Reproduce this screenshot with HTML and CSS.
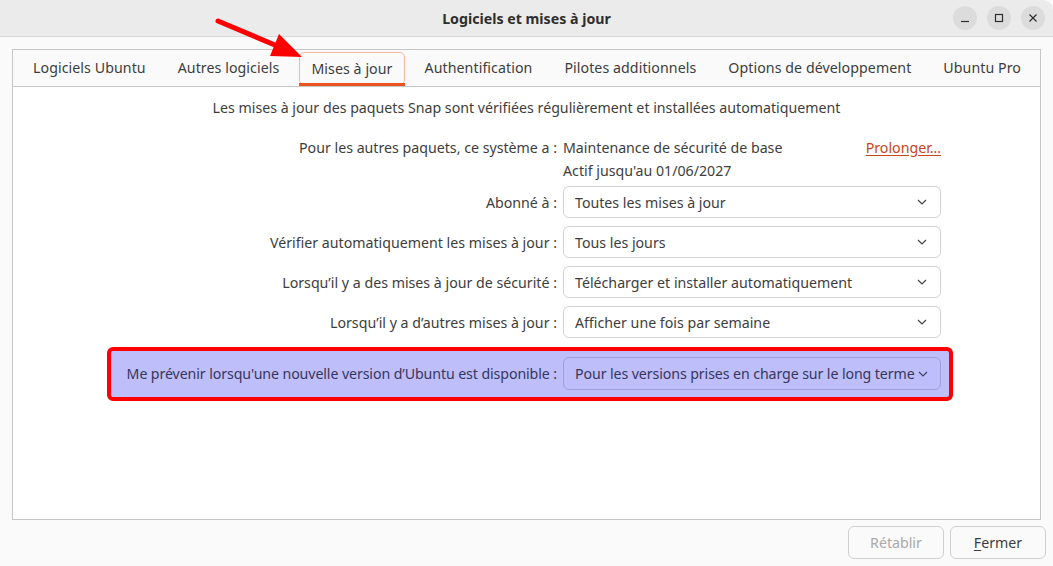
FILE: index.html
```html
<!DOCTYPE html>
<html lang="fr">
<head>
<meta charset="utf-8">
<title>Logiciels et mises à jour</title>
<link rel="stylesheet" href="styles.css">
</head>
<body>
<div class="window">
  <header class="titlebar">
    <span class="title">Logiciels et mises à jour</span>
    <div class="wincontrols">
      <span class="wbtn"><svg width="10" height="10" viewBox="0 0 10 10"><path d="M1 8.5h8" stroke="#2e2e2e" stroke-width="1.2"/></svg></span>
      <span class="wbtn"><svg width="10" height="10" viewBox="0 0 10 10"><rect x="1.5" y="1.5" width="7" height="7" fill="none" stroke="#2e2e2e" stroke-width="1.2"/></svg></span>
      <span class="wbtn"><svg width="10" height="10" viewBox="0 0 10 10"><path d="M1.5 1.5l7 7M8.5 1.5l-7 7" stroke="#2e2e2e" stroke-width="1.2"/></svg></span>
    </div>
  </header>
  <main class="body">
    <div class="notebook">
      <nav class="tabs">
        <span class="tab">Logiciels Ubuntu</span>
        <span class="tab">Autres logiciels</span>
        <span class="tab active">Mises à jour</span>
        <span class="tab">Authentification</span>
        <span class="tab">Pilotes additionnels</span>
        <span class="tab">Options de développement</span>
        <span class="tab">Ubuntu Pro</span>
      </nav>
      <section class="page">
        <p class="snap">Les mises à jour des paquets Snap sont vérifiées régulièrement et installées automatiquement</p>
        <div class="form">
          <span class="label status-label">Pour les autres paquets, ce système a :</span>
          <div class="status">
            <div class="status-line"><span>Maintenance de sécurité de base</span><a class="link">Prolonger…</a></div>
            <div class="status-line">Actif jusqu'au 01/06/2027</div>
          </div>
          <span class="label">Abonné à :</span>
          <div class="combo"><span>Toutes les mises à jour</span><svg class="chev" width="10" height="6" viewBox="0 0 10 6"><path d="M1 1l4 4 4-4" fill="none" stroke="#3d3d3d" stroke-width="1.1"/></svg></div>
          <span class="label">Vérifier automatiquement les mises à jour :</span>
          <div class="combo"><span>Tous les jours</span><svg class="chev" width="10" height="6" viewBox="0 0 10 6"><path d="M1 1l4 4 4-4" fill="none" stroke="#3d3d3d" stroke-width="1.1"/></svg></div>
          <span class="label">Lorsqu’il y a des mises à jour de sécurité :</span>
          <div class="combo"><span>Télécharger et installer automatiquement</span><svg class="chev" width="10" height="6" viewBox="0 0 10 6"><path d="M1 1l4 4 4-4" fill="none" stroke="#3d3d3d" stroke-width="1.1"/></svg></div>
          <span class="label">Lorsqu’il y a d’autres mises à jour :</span>
          <div class="combo"><span>Afficher une fois par semaine</span><svg class="chev" width="10" height="6" viewBox="0 0 10 6"><path d="M1 1l4 4 4-4" fill="none" stroke="#3d3d3d" stroke-width="1.1"/></svg></div>
        </div>
        <div class="highlight">
          <span class="label">Me prévenir lorsqu'une nouvelle version d’Ubuntu est disponible :</span>
          <div class="combo"><span>Pour les versions prises en charge sur le long terme</span><svg class="chev" width="10" height="6" viewBox="0 0 10 6"><path d="M1 1l4 4 4-4" fill="none" stroke="#3d3d6a" stroke-width="1.1"/></svg></div>
        </div>
      </section>
    </div>
    <footer class="actions">
      <button class="btn disabled">Rétablir</button>
      <button class="btn"><u>F</u>ermer</button>
    </footer>
  </main>
  <svg class="arrow" width="1053" height="80" viewBox="0 0 1053 80">
    <path d="M218 21 L282 48" stroke="#ff0000" stroke-width="5" stroke-linecap="round"/>
    <path d="M302 57 L279 34 L270 56 Z" fill="#ff0000"/>
  </svg>
</div>
</body>
</html>
```
FILE: styles.css
```css
html, body {
  margin: 0;
  padding: 0;
}
body {
  width: 1053px;
  height: 566px;
  overflow: hidden;
  background: #fafafa;
  font-family: "Noto Sans", "Open Sans", sans-serif;
  font-size: 14.2px;
  color: #3d3d3d;
}
.window {
  position: relative;
  width: 1053px;
  height: 566px;
  background: #fafafa;
}
.titlebar {
  height: 36px;
  border-bottom: 1px solid #d8d8d8;
  background: #ebebeb;
  border-top-right-radius: 10px;
  display: flex;
  align-items: center;
  justify-content: center;
  position: relative;
}
.title {
  font-weight: bold;
  color: #2e2e2e;
  font-size: 14.2px;
}
.wincontrols {
  position: absolute;
  right: 8px;
  top: 6px;
  display: flex;
  gap: 10px;
}
.wbtn {
  width: 24px;
  height: 24px;
  border-radius: 50%;
  background: #dcdcdc;
  display: flex;
  align-items: center;
  justify-content: center;
}
.body {
  padding: 12px 12px 0 12px;
}
.notebook {
  height: 469px;
  border: 1px solid #c6c6c6;
  display: flex;
  flex-direction: column;
  background: #fff;
}
.tabs {
  height: 36px;
  border-bottom: 1px solid #c6c6c6;
  background: #fafafa;
  display: flex;
  align-items: flex-start;
  padding-left: 8px;
  gap: 8px;
}
.tab {
  height: 33px;
  margin-top: 2px;
  padding: 0 12px 2px 12px;
  display: flex;
  align-items: center;
  box-sizing: border-box;
  white-space: nowrap;
  position: relative;
  letter-spacing: 0.07px;
}
.tab.active {
  border: 1px solid #f4b8a2;
  border-radius: 5px;
  padding: 0 11px 1px 11px;
}
.tab.active::after {
  content: "";
  position: absolute;
  left: -1px;
  right: -1px;
  bottom: -2px;
  height: 3px;
  background: #e95420;
}
.page {
  flex: 1;
  background: #fff;
  padding-top: 11px;
}
.snap {
  margin: 0;
  text-align: center;
  line-height: 20px;
}
.form {
  display: grid;
  grid-template-columns: minmax(0, 1fr) 378px;
  column-gap: 6px;
  row-gap: 8px;
  padding-right: 99px;
  margin-top: 18px;
  align-items: center;
}
.label {
  text-align: right;
  white-space: nowrap;
}
.status-label {
  align-self: start;
  line-height: 23px;
}
.status {
  line-height: 23px;
  margin-bottom: -4px;
}
.status-line {
  display: flex;
  justify-content: space-between;
}
.link {
  color: #c7461a;
  text-decoration: underline;
  text-underline-offset: 2px;
}
.combo {
  height: 32px;
  box-sizing: border-box;
  border: 1px solid #d2d2d2;
  border-radius: 6px;
  background: #fff;
  display: flex;
  align-items: center;
  justify-content: space-between;
  padding: 0 13px 0 11px;
  white-space: nowrap;
}
.chev {
  flex: none;
}
.highlight {
  margin: 9px 87px 0 94px;
  border: 4px solid #ff0000;
  border-radius: 6px;
  background: #bebefb;
  display: grid;
  grid-template-columns: minmax(0, 1fr) 378px;
  column-gap: 6px;
  align-items: center;
  padding: 6px 8px 7px 12px;
  color: #36365c;
  letter-spacing: -0.1px;
}
.highlight .combo {
  background: transparent;
  border-color: #9f9fd6;
  height: 33px;
  padding-right: 12px;
}
.actions {
  display: flex;
  justify-content: flex-end;
  gap: 6px;
  padding-top: 6px;
  margin-right: -5px;
}
.btn {
  font-family: inherit;
  font-size: inherit;
  color: #3d3d3d;
  height: 33px;
  width: 96px;
  border: 1px solid #d0d0d0;
  border-radius: 6px;
  background: #fafafa;
}
.btn.disabled {
  color: #a9a9a9;
}
.btn u {
  text-underline-offset: 2px;
}
.arrow {
  position: absolute;
  left: 0;
  top: 0;
  pointer-events: none;
}
```
